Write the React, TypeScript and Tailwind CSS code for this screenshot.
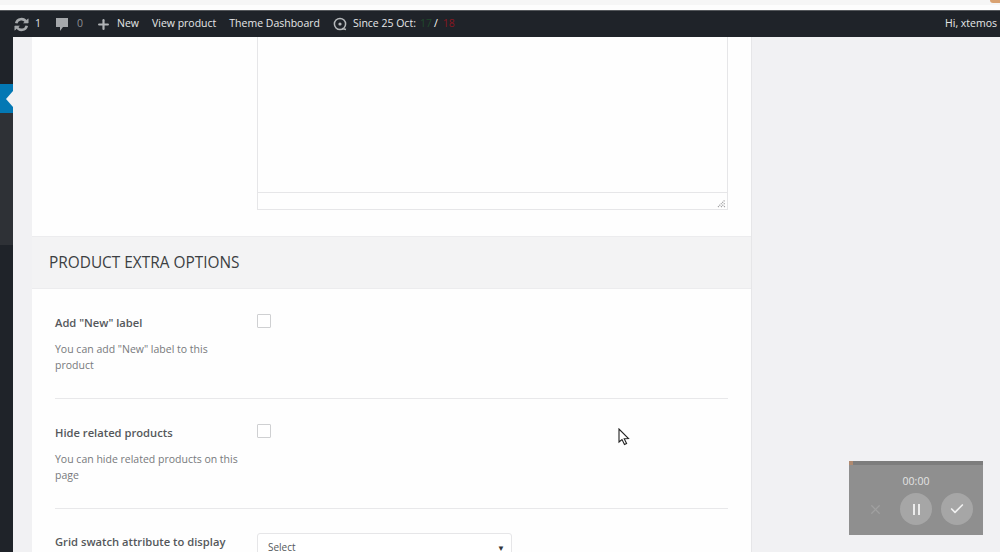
import { Plus, Check, X } from 'lucide-react';

const font = { fontFamily: '"Open Sans", "Noto Sans", sans-serif' };

// one row of the product options form
const OptionRow = ({ label, help }: { label: string; help: string }) => (
  <div className="flex border-b border-[#e8e8ea] h-[110px] pt-[25px]">
    <div className="w-[202px] shrink-0">
      <p className="pt-[1px] text-[11.2px] leading-[16px] font-semibold text-[#55585b]">{label}</p>
      <p className="mt-[10px] w-[186px] text-[10.5px] leading-[16px] text-[#77797c]">{help}</p>
    </div>
    <div className="w-[14px] h-[14px] border border-[#cfd0d2] bg-white rounded-[1px]" />
  </div>
);

const App = () => {
  return (
    <div className="relative h-[552px] w-[1000px] overflow-hidden bg-[#f1f1f3]" style={font}>
      <div className="h-[5px] bg-[#f6f6f6]" />
      <div className="h-[5px] bg-[#fdfdfd]" />
      <div className="absolute right-0 top-0 h-[3px] w-[10px] rounded-bl-[6px] bg-[#d9a272]" />

      {/* Admin bar */}
      <div className="flex h-[27px] items-center bg-[#1f2329] border-t border-[#55585c] pl-[14px] pr-[3px] text-[10.5px] text-[#e6e7e8]">
        <svg width="15" height="15" viewBox="0 0 15 15" fill="none" stroke="#a5a8ab" strokeWidth="2.6">
          <path d="M2.2 6.2 A5.4 5.4 0 0 1 12 4.6" />
          <path d="M12.8 8.8 A5.4 5.4 0 0 1 3 10.4" />
          <path d="M9.6 6 H14.2 V1.8 Z" fill="#a5a8ab" strokeWidth="0.6" />
          <path d="M5.4 9 H0.8 V13.2 Z" fill="#a5a8ab" strokeWidth="0.6" />
        </svg>
        <span className="ml-[6px] w-[20px]">1</span>
        <svg width="14" height="15" viewBox="0 0 14 15">
          <path d="M1 1 H13 V10 H8 L5 14 V10 H1 Z" fill="#a5a8ab" />
        </svg>
        <span className="ml-[8px] text-[#8d9094]">0</span>
        <Plus size={15} strokeWidth={3.5} className="ml-[13px] text-[#b0b3b6]" />
        <span className="ml-[6px]">New</span>
        <span className="ml-[13px]">View product</span>
        <span className="ml-[13px]">Theme Dashboard</span>
        <svg width="14" height="14" viewBox="0 0 14 14" className="ml-[13px]" fill="none">
          <circle cx="7" cy="7" r="5.6" stroke="#b5b8ba" strokeWidth="1.5" />
          <circle cx="7" cy="7" r="1.6" fill="#b5b8ba" />
          <path d="M9 11.5 L13 12.5" stroke="#b5b8ba" strokeWidth="1.5" />
        </svg>
        <span className="ml-[6px]">Since 25 Oct:</span>
        <span className="ml-[4px] text-[#1f4a2c]">17</span>
        <span className="ml-[2px] mr-[5px] text-white">/</span>
        <span className="text-[#8a1620]">18</span>
        <span className="ml-auto">Hi, xtemos</span>
      </div>

      <div className="flex h-[515px]">
        {/* Collapsed side menu */}
        <div className="flex w-[13px] shrink-0 flex-col bg-[#1f2329]">
          <div className="h-[47px]" />
          <div className="flex h-[29px] items-center justify-end bg-[#0378b4]">
            <svg width="7" height="16" viewBox="0 0 7 16">
              <path d="M7 0 V16 L0 8 Z" fill="#f1f1f3" />
            </svg>
          </div>
          <div className="h-[132px] bg-[#2e3136]" />
        </div>

        <div className="flex-1 pl-[19px]">
          <div className="h-[515px] w-[720px] overflow-hidden bg-[#fefefe] border-r border-[#e6e6e8]">
            {/* Editor bottom */}
            <div className="pl-[225px] pr-[23px] h-[199px]">
              <div className="flex h-[173px] flex-col border-x border-b border-[#e6e6e8]">
                <div className="flex-1" />
                <div className="relative h-[17px] border-t border-[#e6e6e8]">
                  <svg width="9" height="9" viewBox="0 0 9 9" className="absolute right-[1px] bottom-[1px]">
                    <path d="M1 8 L8 1 M4 8 L8 4 M7 8 L8 7" stroke="#a0a0a2" strokeWidth="1.2" strokeDasharray="1.2 0.8" />
                  </svg>
                </div>
              </div>
            </div>

            <div className="flex h-[53px] items-center border-y border-[#ececee] bg-[#f3f3f4] pl-[17px]">
              <h2 className="text-[15.4px] font-normal text-[#3c3f42]">PRODUCT EXTRA OPTIONS</h2>
            </div>

            <div className="pl-[23px] pr-[23px]">
              <OptionRow label={'Add "New" label'} help={'You can add "New" label to this product'} />
              <OptionRow label="Hide related products" help="You can hide related products on this page" />
              <div className="flex pt-[24px]">
                <p className="w-[202px] shrink-0 pt-[1px] text-[11.2px] leading-[16px] font-semibold text-[#55585b]">Grid swatch attribute to display</p>
                <div className="flex h-[32px] w-[255px] items-start justify-between rounded-[3px] border border-[#e6e6e8] bg-white pl-[10px] pr-[6px] pt-[9px]">
                  <span className="text-[10px] leading-[9px] text-[#55585b]">Select</span>
                  <span className="text-[8px] leading-[9px] text-[#33363a]">▼</span>
                </div>
              </div>
            </div>
          </div>
        </div>
      </div>

      {/* Mouse pointer */}
      <svg width="13" height="18" viewBox="0 0 13 18" className="absolute left-[618px] top-[428px]">
        <path d="M1 1 L1 14 L4 11.5 L6.5 16.5 L8.6 15.5 L6.2 10.8 L10.5 10.5 Z" fill="#fff" stroke="#222" strokeWidth="1.1" />
      </svg>

      {/* Screen recorder widget */}
      <div className="absolute left-[849px] top-[461px] h-[74px] w-[134px] bg-[#8f8f8f] border-t-[4px] border-[#7d7d7d]">
        <div className="absolute left-0 top-[-4px] h-[4px] w-[4px] bg-[#b08a70]" />
        <p className="mt-[9px] text-center text-[10.5px] leading-[14px] text-[#e4e4e4]">00:00</p>
        <div className="mt-[5px] flex justify-center gap-[9px]">
          <div className="flex h-[32px] w-[32px] items-center justify-center">
            <X size={15} className="text-[#a0a0a0]" />
          </div>
          <div className="flex h-[32px] w-[32px] items-center justify-center gap-[3px] rounded-full bg-[#a6a6a6]">
            <div className="h-[11px] w-[2px] bg-[#ececec]" />
            <div className="h-[11px] w-[2px] bg-[#ececec]" />
          </div>
          <div className="flex h-[32px] w-[32px] items-center justify-center rounded-full bg-[#a6a6a6]">
            <Check size={16} strokeWidth={2.5} className="text-[#f0f0f0]" />
          </div>
        </div>
      </div>
    </div>
  );
};

export default App;
